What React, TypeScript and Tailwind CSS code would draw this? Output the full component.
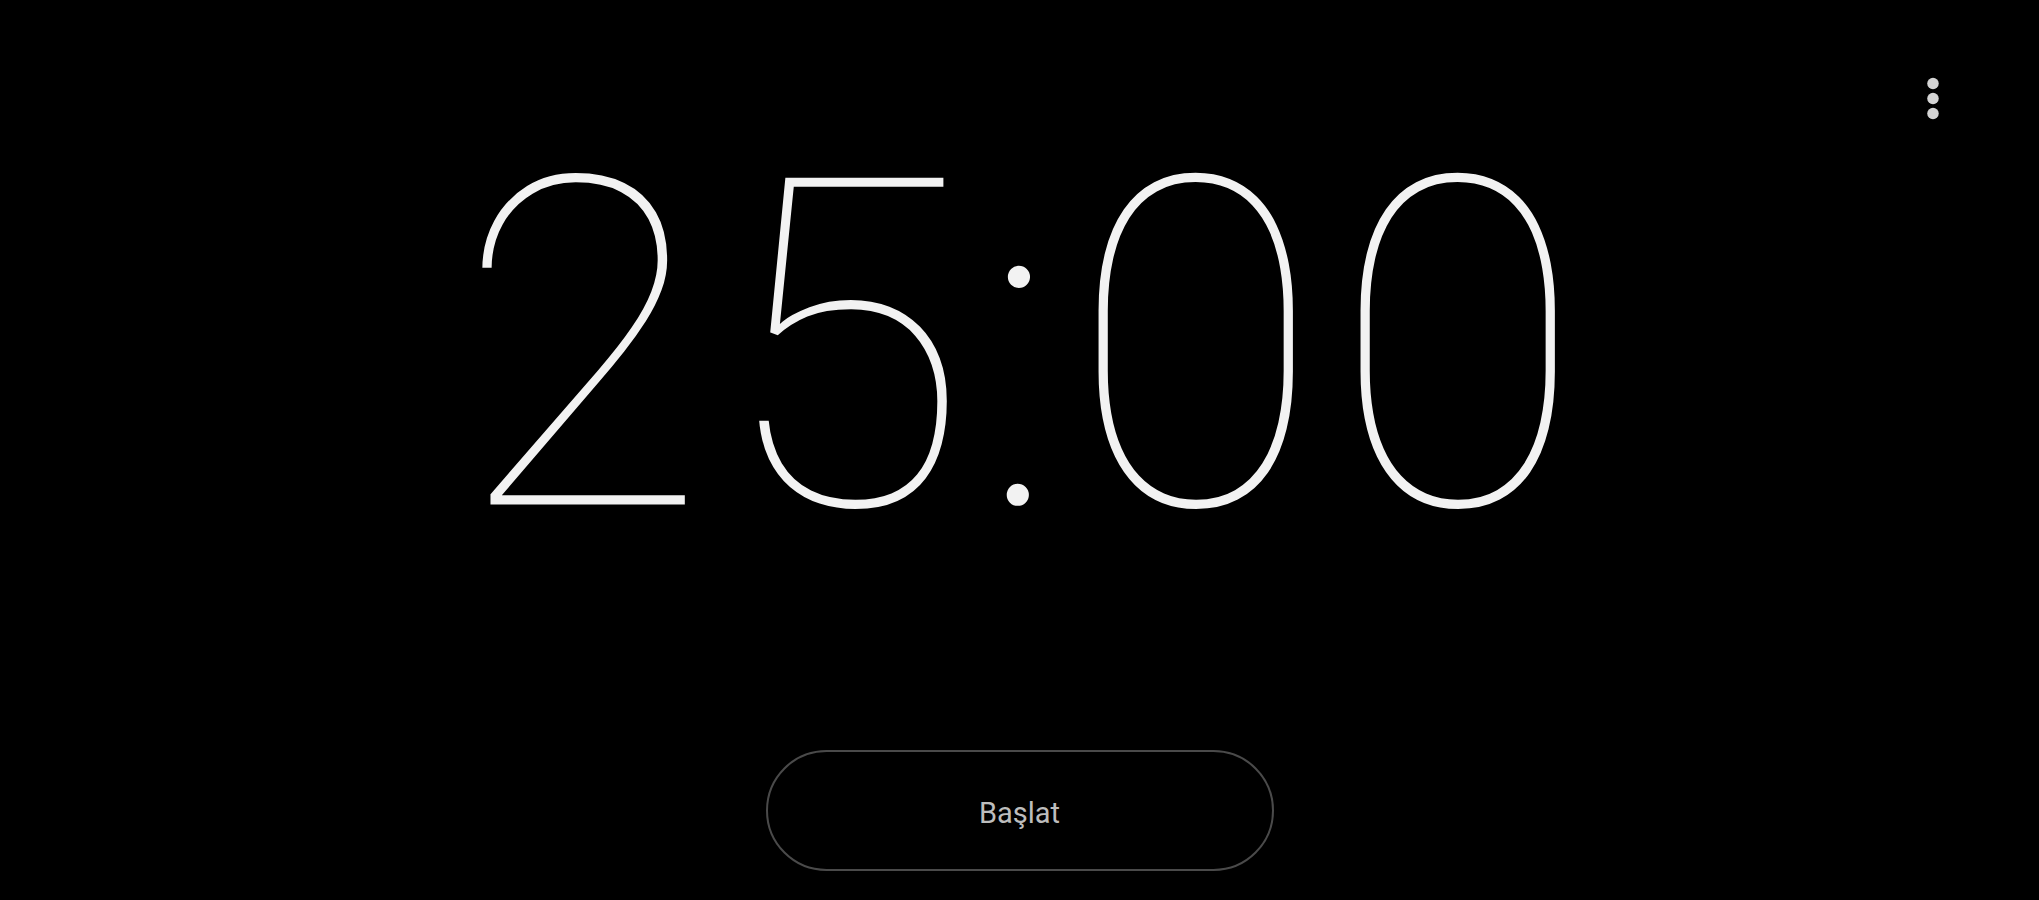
import React from "react";

function MoreVertIcon() {
  return (
    <svg width="60" height="60" viewBox="0 0 24 24" fill="#d4d4d4" aria-hidden="true">
      <circle cx="12" cy="6.2" r="2.3" />
      <circle cx="12" cy="12.2" r="2.3" />
      <circle cx="12" cy="18.2" r="2.3" />
    </svg>
  );
}

export default function App() {
  return (
    <div className="relative flex h-[900px] w-full flex-col items-center bg-black font-['Roboto','Liberation_Sans',sans-serif]">
      <button className="absolute right-[76px] top-[68px] flex items-center justify-center" aria-label="Menü">
        <MoreVertIcon />
      </button>

      {/* thin clock digits: a black outline trims the light face down to a hairline */}
      <div className="mt-[116px] pl-[8px] text-[464px] font-thin leading-none tracking-[8px] text-[#f2f2f2] tabular-nums [-webkit-text-stroke:3px_#000]">
        25:00
      </div>

      <button className="mt-[170px] flex h-[121px] w-[508px] items-center justify-center rounded-full border-2 border-[#4a4a4a] pt-[6px] text-[29px] text-[#bdbdbd]">
        Başlat
      </button>
    </div>
  );
}
